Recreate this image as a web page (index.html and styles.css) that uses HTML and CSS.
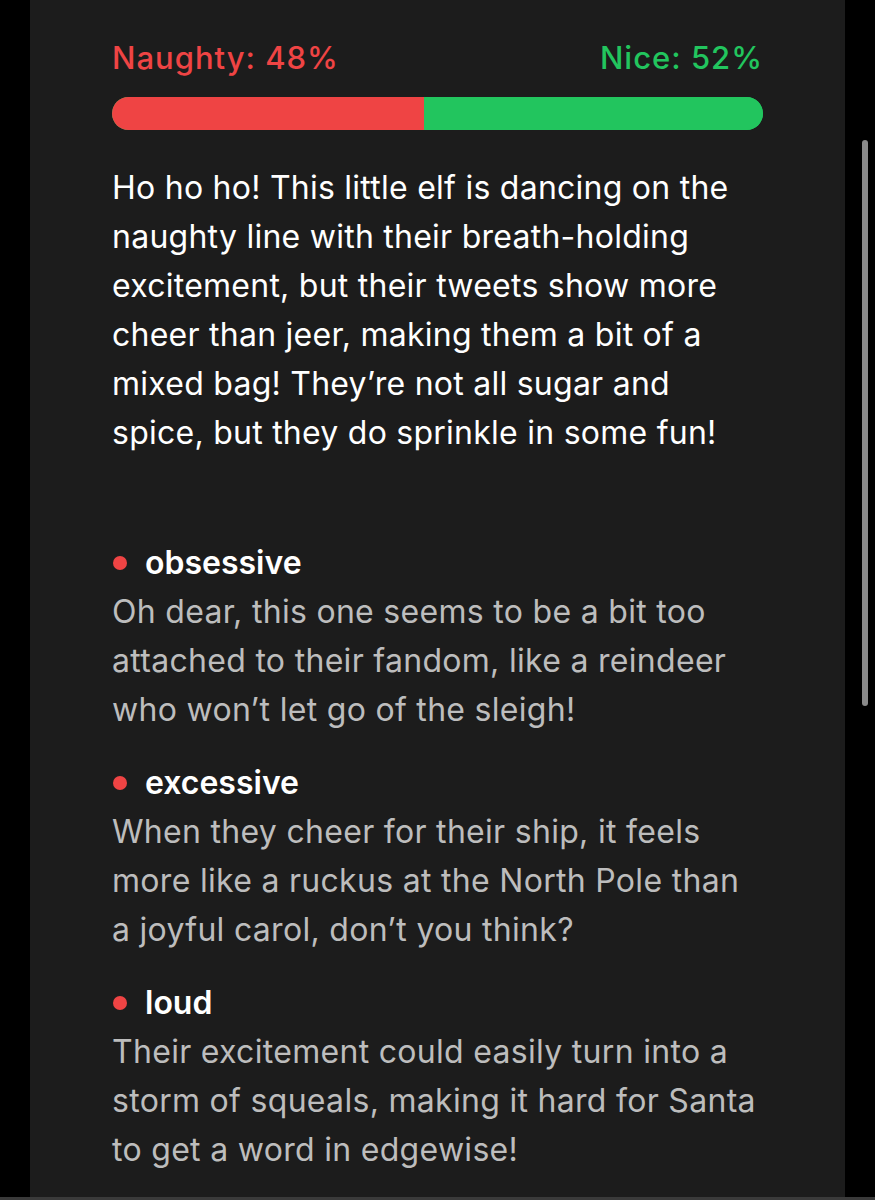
FILE: index.html
```html
<!DOCTYPE html>
<html lang="en">
<head>
<meta charset="utf-8">
<title>Naughty or Nice</title>
<link rel="stylesheet" href="styles.css">
</head>
<body>
<div class="screen">
  <main class="card">
    <div class="score">
      <span class="naughty">Naughty: 48%</span>
      <span class="nice">Nice: 52%</span>
    </div>
    <div class="bar">
      <div class="bar-naughty" style="width:48%"></div>
      <div class="bar-nice"></div>
    </div>
    <p class="summary">Ho ho ho! This little elf is dancing on the naughty line with their breath-holding excitement, but their tweets show more cheer than jeer, making them a bit of a mixed bag! They’re not all sugar and spice, but they do sprinkle in some fun!</p>
    <ul class="traits">
      <li class="trait">
        <div class="trait-title"><span class="dot"></span>obsessive</div>
        <p class="trait-desc">Oh dear, this one seems to be a bit too attached to their fandom, like a reindeer who won’t let go of the sleigh!</p>
      </li>
      <li class="trait">
        <div class="trait-title"><span class="dot"></span>excessive</div>
        <p class="trait-desc">When they cheer for their ship, it feels more like a ruckus at the North Pole than a joyful carol, don’t you think?</p>
      </li>
      <li class="trait">
        <div class="trait-title"><span class="dot"></span>loud</div>
        <p class="trait-desc">Their excitement could easily turn into a storm of squeals, making it hard for Santa to get a word in edgewise!</p>
      </li>
    </ul>
  </main>
  <div class="scrollbar"></div>
  <div class="bottom-strip"></div>
</div>
</body>
</html>
```

FILE: styles.css
```css
html, body {
  margin: 0;
  padding: 0;
  background: #000;
}
body {
  font-family: Inter, "Noto Sans", sans-serif;
  color: #fff;
}
.screen {
  position: relative;
  width: 875px;
  height: 1200px;
  overflow: hidden;
  background: #000;
}
.card {
  margin: 0 30px;
  background: #1c1c1c;
  min-height: 1200px;
  padding: 38px 82px 0;
  box-sizing: border-box;
}
.score {
  display: flex;
  justify-content: space-between;
  font-size: 31px;
  line-height: 40px;
  font-weight: 500;
  letter-spacing: 1px;
}
.naughty { color: #ef4444; }
.nice { color: #22c55e; }
.bar {
  display: flex;
  height: 33px;
  margin-top: 19px;
  border-radius: 17px;
  overflow: hidden;
  background: #22c55e;
}
.bar-naughty { background: #ef4444; }
.bar-nice { flex: 1; background: #22c55e; }
.summary {
  margin: 33px 0 0;
  font-size: 32px;
  line-height: 49px;
  letter-spacing: 0.25px;
  color: #fff;
}
.traits {
  list-style: none;
  margin: 81px 0 0;
  padding: 0;
}
.trait + .trait {
  margin-top: 24px;
}
.trait-title {
  display: flex;
  align-items: center;
  gap: 18px;
  font-size: 32px;
  line-height: 49px;
  font-weight: 600;
  color: #fff;
}
.dot {
  width: 14px;
  height: 14px;
  border-radius: 50%;
  background: #ef4444;
  margin-left: 1px;
  flex: none;
}
.trait-desc {
  margin: 0;
  font-size: 32px;
  line-height: 49px;
  letter-spacing: 0.3px;
  color: #bdbdbd;
}
.scrollbar {
  position: absolute;
  left: 862px;
  top: 140px;
  width: 6px;
  height: 566px;
  border-radius: 3px;
  background: #8a8a8a;
}
.bottom-strip {
  position: absolute;
  left: 0;
  right: 0;
  bottom: 0;
  height: 3px;
  background: #3a3a3a;
}
```
